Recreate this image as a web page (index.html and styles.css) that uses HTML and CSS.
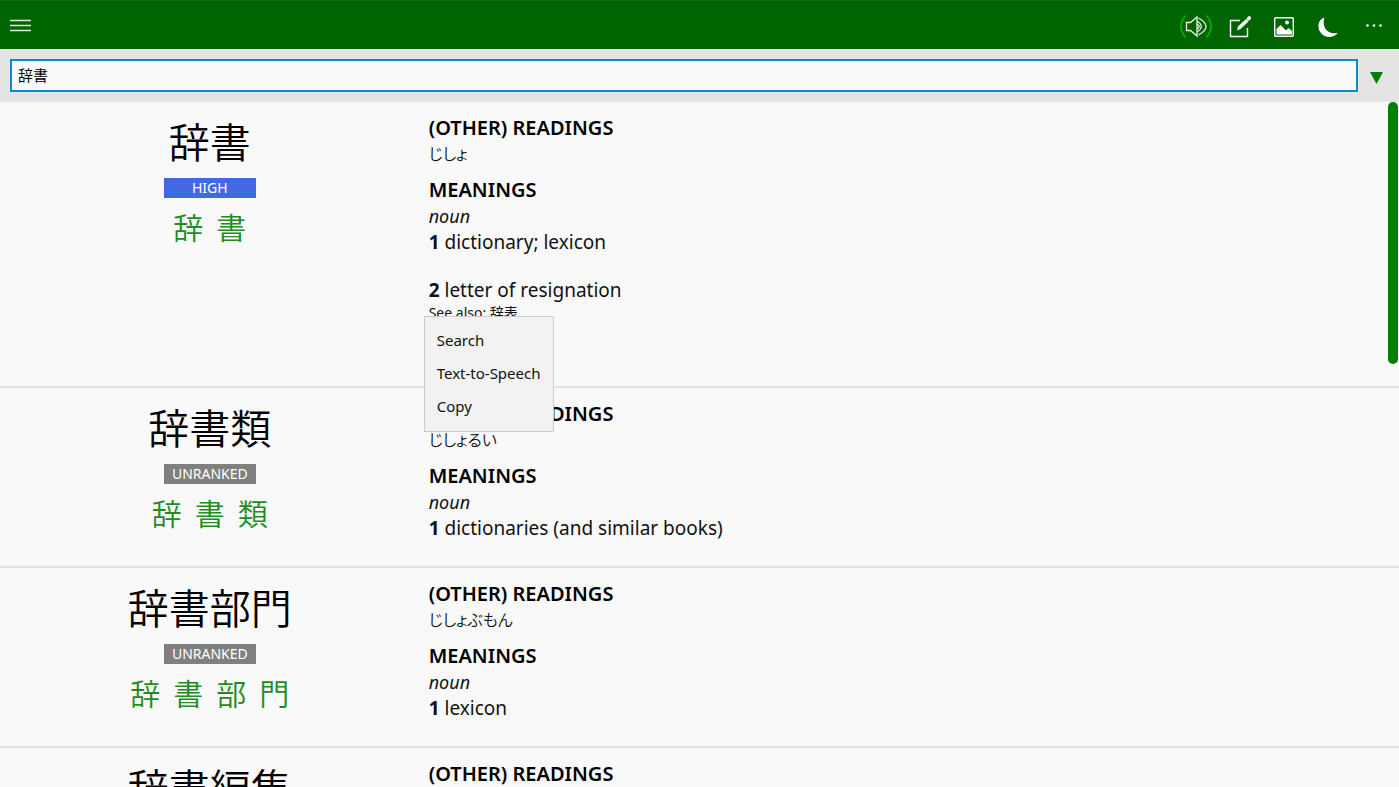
FILE: index.html
```html
<!DOCTYPE html>
<html lang="en">
<head>
    <meta charset="UTF-8">
    <meta name="viewport" content="width=device-width, initial-scale=1.0">
    <title>Dictionary</title>
    <link rel="stylesheet" href="styles.css">
</head>
<body>
    <header class="toolbar">
        <button class="tool menu-button" aria-label="Menu">
            <svg width="21" height="13" viewBox="0 0 21 13" fill="none" stroke="#dcebdc" stroke-width="1.3">
                <path d="M0 1.5h21M0 6.5h21M0 11.5h21"/>
            </svg>
        </button>
        <button class="tool" aria-label="Sound">
            <svg width="32" height="28" viewBox="0 0 32 28" fill="none" stroke="#e6f2e6" stroke-width="1.3">
                <path d="M5.500 2.500Q-3.500 13.500 5.500 24.500M26.500 2.500Q35.500 13.500 26.500 24.500" stroke="#00b400" stroke-width="1.6"/>
                <path d="M6.500 9.500h4l6.500-5.500v19l-6.500-5.500h-4z"/>
                <path d="M17 11q4.500 2.500 0 5M17 8q8.500 5.500 0 11M18.500 5q15 8.500 0 17"/>
            </svg>
        </button>
        <button class="tool" aria-label="Write">
            <svg width="32" height="28" viewBox="0 0 32 28" fill="none" stroke="#fff">
                <path d="M16 7.500H6.500v16h17V15" stroke-width="1.4"/>
                <path d="M13 17.500l1-4 8-7.500 2.500 2.500-8 7.500z" fill="#fff" stroke="none"/>
                <path d="M24.500 5.700l.8-.8" stroke-width="3.600" stroke-linecap="round"/>
            </svg>
        </button>
        <button class="tool" aria-label="Image">
            <svg width="32" height="28" viewBox="0 0 32 28">
                <rect x="6.700" y="4.700" width="18.600" height="18.600" rx="1" fill="none" stroke="#fff" stroke-width="1.400"/>
                <path d="M8.500 21.500v-5.500l4-4 5.500 5.500 2.500-2.500 3.500 3v3.500z" fill="#fff"/>
                <circle cx="19" cy="9.500" r="1.900" fill="#fff"/>
            </svg>
        </button>
        <button class="tool" aria-label="Night mode">
            <svg width="32" height="28" viewBox="0 0 32 28">
                <path d="M12.500 4.500C8 6 6 10 6.500 14c.7 7.500 8 11.500 14.500 9.300 2-.8 4-2.300 4.700-3.600C17 22.500 9 15 12.500 4.500z" fill="#fff"/>
            </svg>
        </button>
        <button class="tool more-button" aria-label="More">
            <svg width="32" height="28" viewBox="0 0 32 28" fill="#fff">
                <circle cx="9.500" cy="12.500" r="1.300"/>
                <circle cx="16" cy="12.500" r="1.300"/>
                <circle cx="22.500" cy="12.500" r="1.300"/>
            </svg>
        </button>
    </header>

    <form class="search">
        <input class="search-input" type="text" value="辞書" aria-label="Search" lang="ja">
        <button class="search-toggle" type="button" aria-label="Search options">
            <svg width="13" height="12" viewBox="0 0 13 12"><path d="M0 0h13L6.500 12z" fill="#008000"/></svg>
        </button>
    </form>

    <main class="results">
        <article class="entry">
            <div class="word">
                <h1 lang="ja">辞書</h1>
                <span class="rank high">HIGH</span>
                <div class="kanji" lang="ja"><a href="#">辞</a><a href="#">書</a></div>
            </div>
            <div class="details">
                <h2>(OTHER) READINGS</h2>
                <p class="reading" lang="ja">じしょ</p>
                <h2>MEANINGS</h2>
                <p class="type">noun</p>
                <p class="meaning"><b>1</b> dictionary; lexicon</p>
                <p class="meaning"><b>2</b> letter of resignation</p>
                <div class="note">
                    See also: <span lang="ja">辞表</span>
                    <div class="context-menu">
                        <button>Search</button>
                        <button>Text-to-Speech</button>
                        <button>Copy</button>
                    </div>
                </div>
            </div>
        </article>

        <article class="entry">
            <div class="word">
                <h1 lang="ja">辞書類</h1>
                <span class="rank">UNRANKED</span>
                <div class="kanji" lang="ja"><a href="#">辞</a><a href="#">書</a><a href="#">類</a></div>
            </div>
            <div class="details">
                <h2>(OTHER) READINGS</h2>
                <p class="reading" lang="ja">じしょるい</p>
                <h2>MEANINGS</h2>
                <p class="type">noun</p>
                <p class="meaning"><b>1</b> dictionaries (and similar books)</p>
            </div>
        </article>

        <article class="entry">
            <div class="word">
                <h1 lang="ja">辞書部門</h1>
                <span class="rank">UNRANKED</span>
                <div class="kanji" lang="ja"><a href="#">辞</a><a href="#">書</a><a href="#">部</a><a href="#">門</a></div>
            </div>
            <div class="details">
                <h2>(OTHER) READINGS</h2>
                <p class="reading" lang="ja">じしょぶもん</p>
                <h2>MEANINGS</h2>
                <p class="type">noun</p>
                <p class="meaning"><b>1</b> lexicon</p>
            </div>
        </article>

        <article class="entry">
            <div class="word">
                <h1 lang="ja">辞書編集</h1>
            </div>
            <div class="details">
                <h2>(OTHER) READINGS</h2>
            </div>
        </article>
        <div class="scroll-thumb"></div>
    </main>
</body>
</html>
```
FILE: styles.css
```css
* {
    box-sizing: border-box;
}

body {
    display: flex;
    flex-direction: column;
    height: 100vh;
    margin: 0;
    overflow: hidden;
    background-color: #f9f9f9;
    color: #000;
    font-family: "Noto Sans", "Noto Sans CJK JP", sans-serif;
}

h1, h2, p {
    margin: 0;
}

button {
    padding: 0;
    border: none;
    background: none;
    font-family: inherit;
    cursor: pointer;
}

svg {
    display: block;
}

/* top bar */
.toolbar {
    display: flex;
    flex-shrink: 0;
    align-items: center;
    gap: 12px;
    height: 49px;
    padding: 4px 9px 0 10px;
    background-color: #006400;
    border-top: 1px solid #14701a;
}

.menu-button {
    margin-right: auto;
    padding-bottom: 4px;
}

.more-button {
    margin-left: 2px;
}

/* search row */
.search {
    display: flex;
    flex-shrink: 0;
    align-items: center;
    gap: 12px;
    height: 53px;
    padding: 0 16px 0 10px;
    background-color: #e4e4e4;
}

.search-input {
    flex: 1;
    height: 33px;
    padding: 0 6px 2px;
    border: 2px solid #0f8ac8;
    border-radius: 0;
    outline: none;
    background-color: #f9f9f9;
    font-family: "Noto Sans CJK JP", sans-serif;
    font-size: 15px;
}

.search-toggle {
    padding-top: 4px;
}

/* results */
.results {
    position: relative;
    flex: 1;
    min-height: 0;
    overflow: hidden;
}

.entry {
    display: grid;
    grid-template-columns: 30% 1fr;
    padding: 13px 0 3px;
    border-bottom: 2px solid #e2e2e2;
}

.word {
    display: flex;
    flex-direction: column;
    align-items: center;
}

.word h1 {
    font-family: "Noto Sans CJK JP", sans-serif;
    font-size: 41px;
    font-weight: 350;
    line-height: 50px;
}

.rank {
    width: 92px;
    margin: 13px 0 10px;
    background-color: #808080;
    color: #fff;
    font-size: 14px;
    line-height: 20px;
    text-align: center;
}

.rank.high {
    background-color: #4169e1;
}

.kanji {
    display: flex;
    gap: 13px;
    font-family: "Noto Sans CJK JP", sans-serif;
    font-size: 30px;
    font-weight: 350;
    line-height: 36px;
}

.kanji a {
    color: #228b22;
    text-decoration: none;
}

.details {
    padding-left: 9px;
    color: #111;
    font-size: 19px;
    line-height: 26px;
}

.details h2 {
    color: #000;
    font-size: 20px;
    font-weight: 600;
}

.reading {
    margin-bottom: 12px;
    font-family: "Noto Sans CJK JP", sans-serif;
    font-size: 16px;
    font-weight: 350;
    font-feature-settings: "palt";
    line-height: 24px;
}

.type {
    font-size: 18px;
    font-style: italic;
}

.meaning {
    margin-bottom: 22px;
}

.note {
    position: relative;
    margin: -22px 0 60px;
    font-size: 14px;
    line-height: 20px;
}

/* right-click menu */
.context-menu {
    position: absolute;
    top: 13px;
    left: -5px;
    z-index: 1;
    display: flex;
    flex-direction: column;
    padding: 7px 0 8px;
    border: 1px solid #ccc;
    background-color: #f2f2f2;
}

.context-menu button {
    padding: 0 12px;
    color: #111;
    font-size: 15px;
    line-height: 33px;
    text-align: left;
    white-space: nowrap;
}

.scroll-thumb {
    position: absolute;
    top: 0;
    right: 1px;
    width: 10px;
    height: 38.3%;
    border-radius: 5px;
    background-color: #008000;
}
```
